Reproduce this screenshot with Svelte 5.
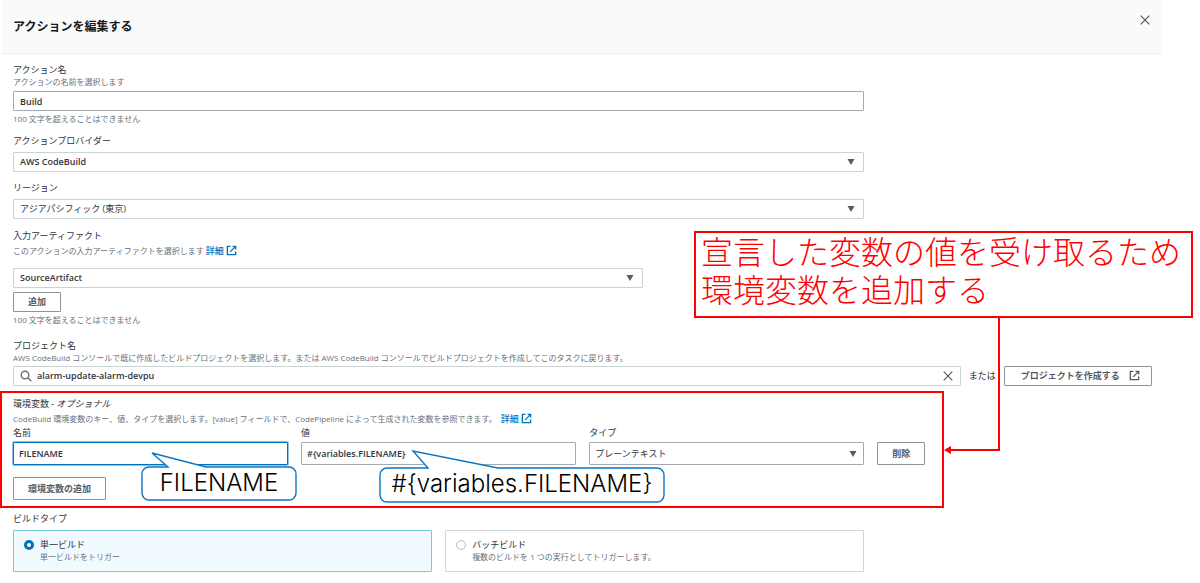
<script>
  let actionName = $state('Build');
  let provider = $state('AWS CodeBuild');
  let region = $state('アジアパシフィック (東京)');
  let artifact = $state('SourceArtifact');
  let project = $state('alarm-update-alarm-devpu');
  let variable = $state({ name: 'FILENAME', value: '#{variables.FILENAME}', type: 'プレーンテキスト' });
  let buildType = $state('single');

  const buildTypes = [
    { id: 'single', title: '単一ビルド', text: '単一ビルドをトリガー' },
    { id: 'batch', title: 'バッチビルド', text: '複数のビルドを 1 つの実行としてトリガーします。' }
  ];
</script>

{#snippet external()}
  <svg class="external" viewBox="0 0 16 16" aria-hidden="true">
    <path d="M6.500 2H2v12h12V9.500M9.500 2H14v4.500M14 2 6 10" />
  </svg>
{/snippet}

{#snippet dropdown(id, value)}
  <div class="select">
    <select {id}><option>{value}</option></select>
    <svg viewBox="0 0 8 6" aria-hidden="true"><path d="M0.500 0h7L4 6z" /></svg>
  </div>
{/snippet}

<div class="page" lang="ja">
  <header>
    <h1>アクションを編集する</h1>
    <button class="icon-button" type="button" aria-label="閉じる">
      <svg viewBox="0 0 10 10" aria-hidden="true"><path d="M0.700 0.700l8.600 8.600M9.300 0.700l-8.600 8.600" /></svg>
    </button>
  </header>

  <main>
    <section class="field form-width">
      <label for="action-name">アクション名</label>
      <p>アクションの名前を選択します</p>
      <input class="control strong tight" id="action-name" type="text" bind:value={actionName} />
      <p class="hint">100 文字を超えることはできません</p>
    </section>

    <section class="field form-width">
      <label for="provider">アクションプロバイダー</label>
      {@render dropdown('provider', provider)}
    </section>

    <section class="field form-width">
      <label for="region">リージョン</label>
      {@render dropdown('region', region)}
    </section>

    <section class="field form-width artifact">
      <label for="artifact">入力アーティファクト</label>
      <p>このアクションの入力アーティファクトを選択します <a href="#artifact">詳細 {@render external()}</a></p>
      {@render dropdown('artifact', artifact)}
      <button class="button" type="button">追加</button>
      <p class="hint">100 文字を超えることはできません</p>
    </section>

    <section class="field project">
      <label for="project">プロジェクト名</label>
      <p>AWS CodeBuild コンソールで既に作成したビルドプロジェクトを選択します。または AWS CodeBuild コンソールでビルドプロジェクトを作成してこのタスクに戻ります。</p>
      <div class="project-row">
        <div class="search control">
          <svg class="magnifier" viewBox="0 0 12 12" aria-hidden="true"><circle cx="5" cy="5" r="3.800" /><path d="M7.800 7.800 11.300 11.300" /></svg>
          <input id="project" type="text" bind:value={project} />
          <button class="icon-button" type="button" aria-label="クリア">
            <svg viewBox="0 0 10 10" aria-hidden="true"><path d="M0.700 0.700l8.600 8.600M9.300 0.700l-8.600 8.600" /></svg>
          </button>
        </div>
        <span>または</span>
        <button class="button" type="button">プロジェクトを作成する {@render external()}</button>
      </div>
    </section>

    <section class="variables">
      <h2>環境変数 - <em>オプショナル</em></h2>
      <p>CodeBuild 環境変数のキー、値、タイプを選択します。[value] フィールドで、CodePipeline によって生成された変数を参照できます。&nbsp; <a href="#variables">詳細 {@render external()}</a></p>
      <div class="variable-row">
        <div class="variable-fields">
          <div>
            <label for="var-name">名前</label>
            <input class="control strong focused" id="var-name" type="text" bind:value={variable.name} />
          </div>
          <div>
            <label for="var-value">値</label>
            <input class="control strong" id="var-value" type="text" bind:value={variable.value} />
          </div>
          <div>
            <label for="var-type">タイプ</label>
            {@render dropdown('var-type', variable.type)}
          </div>
        </div>
        <button class="button" type="button">削除</button>
      </div>
      <button class="button add" type="button">環境変数の追加</button>

      <div class="callout name-callout">
        <svg viewBox="0 0 156 50" aria-hidden="true">
          <path d="M8 15H27L11 1 65 15H148a7 7 0 0 1 7 7V41a7 7 0 0 1-7 7H8a7 7 0 0 1-7-7V22a7 7 0 0 1 7-7z" />
        </svg>
        <span>FILENAME</span>
      </div>
      <div class="callout value-callout">
        <svg viewBox="0 0 286 53" aria-hidden="true">
          <path d="M8 18H49L34 1 119 18H278a7 7 0 0 1 7 7V45a7 7 0 0 1-7 7H8a7 7 0 0 1-7-7V25a7 7 0 0 1 7-7z" />
        </svg>
        <span>#&#123;variables.FILENAME&#125;</span>
      </div>
    </section>

    <fieldset class="form-width">
      <legend>ビルドタイプ</legend>
      <div class="cards">
        {#each buildTypes as item}
          <label class="card" class:selected={buildType === item.id}>
            <input type="radio" name="build-type" value={item.id} bind:group={buildType} />
            <span>
              <strong>{item.title}</strong>
              <small>{item.text}</small>
            </span>
          </label>
        {/each}
      </div>
    </fieldset>
  </main>

  <aside class="note"><p>宣言した変数の値を受け取るため<br />環境変数を追加する</p></aside>
  <svg class="connector" viewBox="0 0 58 138" aria-hidden="true">
    <path class="line" d="M55 0V133H5" />
    <path class="head" d="M0 133l7-4v8z" />
  </svg>
</div>

<style>
  :global(body) {
    margin: 0;
    background: #fff;
  }
  .page {
    position: relative;
    min-width: 1100px;
    box-sizing: border-box;
    padding: 0 38px 10px 0;
    color: #30353c;
    font: 9px/12px "Open Sans", "Noto Sans CJK JP", sans-serif;
  }
  input,
  select,
  button {
    font: inherit;
    color: inherit;
    box-sizing: border-box;
    margin: 0;
  }
  header {
    display: flex;
    justify-content: space-between;
    align-items: flex-start;
    margin-left: 1px;
    padding: 14px 11px 13px 12px;
    background: #fafafa;
    border-bottom: 1px solid #eeeeee;
  }
  h1 {
    margin: 0;
    font-size: 12px;
    line-height: 26px;
    font-weight: 700;
    color: #16191f;
  }
  .icon-button {
    display: flex;
    padding: 1px;
    border: 0;
    background: none;
  }
  .icon-button svg {
    width: 10px;
    height: 10px;
    fill: none;
    stroke: #545b64;
    stroke-width: 1.2;
  }
  main {
    padding: 10px 10px 0 13px;
  }
  .form-width {
    width: calc(75% - 3px);
  }
  .field {
    display: flex;
    flex-direction: column;
    margin-bottom: 10px;
  }
  label,
  h2,
  legend {
    display: block;
    margin: 0;
    padding: 0;
    font-size: 9px;
    line-height: 12px;
    font-weight: 400;
  }
  p {
    margin: 0;
    font-size: 8px;
    line-height: 12px;
    color: #687078;
  }
  .hint {
    margin-top: 2px;
  }
  a {
    color: #0073bb;
    font-size: 9px;
    font-weight: 500;
    text-decoration: none;
  }
  .external {
    width: 11px;
    height: 11px;
    vertical-align: -2px;
    fill: none;
    stroke: currentColor;
    stroke-width: 2;
  }
  .control,
  .select select {
    width: 100%;
    height: 20px;
    padding: 0 6px;
    border: 1px solid #c9d3d4;
    border-radius: 1px;
    background: #fff;
    outline: 0;
  }
  .control,
  .control input,
  #provider,
  #artifact {
    font-weight: 600;
  }
  .control.strong {
    border-color: #a4a9af;
  }
  .tight {
    margin-top: 3px;
  }
  .select {
    position: relative;
    margin-top: 5px;
  }
  .select select {
    display: block;
    appearance: none;
  }
  .select svg {
    position: absolute;
    right: 9px;
    top: 50%;
    width: 8px;
    height: 6px;
    margin-top: -3px;
    fill: #545b64;
    pointer-events: none;
  }
  .button {
    height: 20px;
    padding: 0 14px;
    border: 1px solid #8d949b;
    border-radius: 1px;
    background: #fff;
    color: #545b64;
    font-weight: 700;
    white-space: nowrap;
  }
  .artifact {
    margin-top: 11px;
  }
  .artifact p:not(.hint) {
    margin-top: 3px;
  }
  .artifact .select {
    width: 74%;
    margin-top: 11px;
  }
  .artifact .button {
    align-self: flex-start;
    margin-top: 4px;
  }
  .project {
    margin: 14px 0 5px;
  }
  .project-row {
    display: flex;
    align-items: center;
    gap: 8px;
    margin-top: 2px;
  }
  .search {
    flex: 1;
    display: flex;
    align-items: center;
    box-sizing: border-box;
    gap: 5px;
  }
  .search input {
    flex: 1;
    padding: 0;
    border: 0;
    outline: 0;
    background: none;
  }
  .magnifier {
    width: 12px;
    height: 12px;
    fill: none;
    stroke: #687078;
    stroke-width: 1.4;
  }
  .project-row .button {
    padding: 0 11px 0 16px;
  }
  .project-row .external {
    margin-left: 7px;
  }
  .variables {
    position: relative;
    padding: 7px 0 8px;
  }
  .variables::before {
    content: "";
    position: absolute;
    inset: 0 208px 0 -13px;
    border: 2px solid #ff0000;
    pointer-events: none;
  }
  .variables p {
    margin: 3px 0 2px;
  }
  .variable-row {
    display: grid;
    grid-template-columns: calc(75% - 3px) auto;
    justify-content: start;
    align-items: end;
    gap: 13px;
  }
  .variable-fields {
    display: grid;
    grid-template-columns: repeat(3, 1fr);
    gap: 13px;
  }
  .variable-fields .control,
  .variable-fields select {
    display: block;
    height: 23px;
    padding: 0 5px;
    border-color: #a4a9af;
  }
  .variable-fields .control,
  .variable-fields .select {
    margin-top: 3px;
  }
  .variable-fields .select svg {
    right: 7px;
  }
  .variable-fields .control.focused {
    border-color: #0073bb;
    box-shadow: 0 0 0 1px #8fc2e3;
  }
  .variables .button {
    height: 23px;
  }
  .add {
    display: block;
    margin-top: 12px;
  }
  .callout {
    position: absolute;
    display: grid;
    color: #000;
    font: 300 24px/34px Inter, "Noto Sans CJK JP", sans-serif;
  }
  .callout svg {
    position: absolute;
    inset: 0;
    width: 100%;
    height: 100%;
    fill: #fff;
    stroke: #0b76c4;
    stroke-width: 1.4;
  }
  .callout span {
    position: relative;
    align-self: end;
    text-align: center;
    padding-bottom: 2px;
  }
  .name-callout {
    left: 128px;
    top: 61px;
    width: 156px;
    height: 50px;
  }
  .value-callout {
    left: 366px;
    top: 59px;
    width: 286px;
    height: 53px;
  }
  fieldset {
    margin: 0;
    padding: 5px 0 0;
    border: 0;
    min-width: 0;
  }
  legend {
    float: left;
    width: 100%;
    margin-bottom: 5px;
  }
  .cards {
    clear: both;
    display: grid;
    grid-template-columns: repeat(2, 1fr);
    gap: 13px;
  }
  .card {
    display: flex;
    align-items: flex-start;
    gap: 6px;
    padding: 8px 10px;
    border: 1px solid #d0d7d7;
    border-radius: 1px;
  }
  .card.selected {
    border-color: #74cbe0;
    background: #f1faff;
  }
  .card input {
    appearance: none;
    width: 10px;
    height: 10px;
    margin-top: 1px;
    border: 1px solid #b4bbbf;
    border-radius: 50%;
    background: #fff;
  }
  .card input:checked {
    border: 3px solid #0073bb;
  }
  .card strong,
  .card small {
    display: block;
    font-size: 9px;
    line-height: 12px;
    font-weight: 400;
  }
  .card small {
    font-size: 8px;
    color: #687078;
  }
  .note {
    position: absolute;
    top: 231px;
    right: 7px;
    width: 499px;
    height: 87px;
    box-sizing: border-box;
    padding: 0 5px;
    border: 2px solid #ff0000;
    background: #fff;
  }
  .note p {
    margin-top: -2px;
    color: #ff0000;
    font: 300 32px/38px "Noto Sans CJK JP", sans-serif;
    white-space: nowrap;
  }
  .connector {
    position: absolute;
    top: 317px;
    right: 198px;
    width: 58px;
    height: 138px;
    pointer-events: none;
  }
  .line {
    fill: none;
    stroke: #ff0000;
    stroke-width: 2;
  }
  .head {
    fill: #ff0000;
  }
</style>
